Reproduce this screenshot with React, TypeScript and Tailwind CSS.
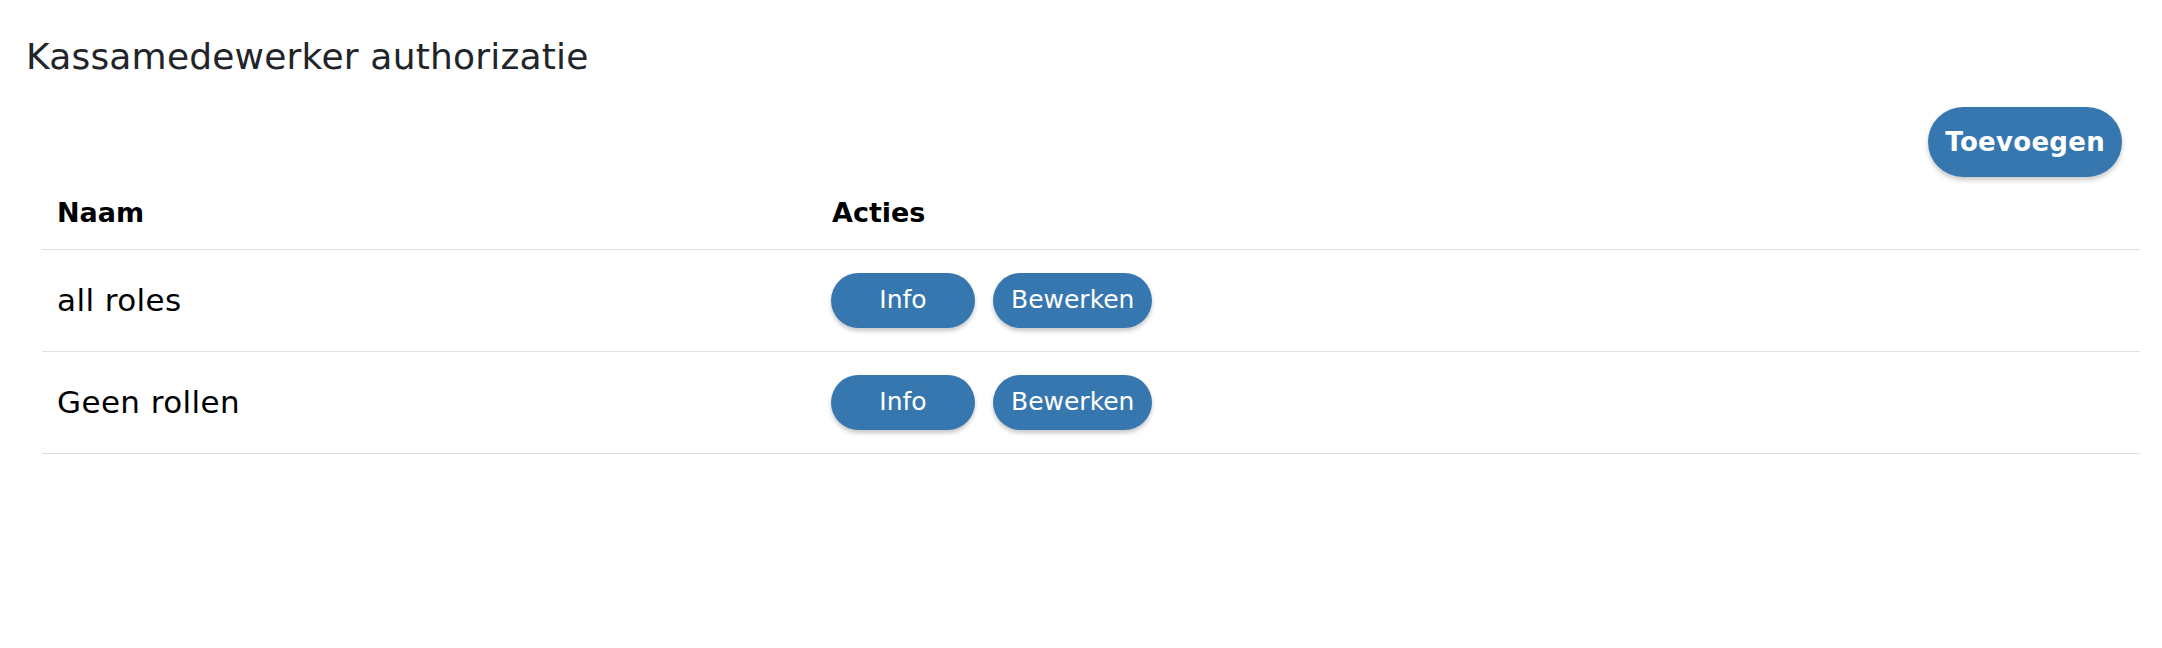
import React from "react";

const font = { fontFamily: "'DejaVu Sans', 'Noto Sans', sans-serif" };

function Btn({ children, wide }: { children: React.ReactNode; wide?: boolean }) {
  return (
    <button
      className={
        "h-[55px] rounded-full bg-[#3777b0] px-[18px] text-[25px] font-normal text-white shadow-[0_3px_4px_rgba(0,0,0,0.22)] " +
        (wide ? "min-w-[144px]" : "")
      }
    >
      {children}
    </button>
  );
}

export default function App() {
  const rows = ["all roles", "Geen rollen"];
  return (
    <div className="min-h-[648px] w-[2162px] bg-white" style={font}>
      <h1 className="pl-[26px] pt-[35px] text-[36px] font-normal leading-[44px] tracking-[0.2px] text-[#212529]">
        Kassamedewerker authorizatie
      </h1>
      <div className="mt-[28px] flex justify-end pr-[40px]">
        <button className="h-[70px] rounded-full bg-[#3777b0] px-[17px] text-[26px] font-bold tracking-[0.3px] text-white shadow-[0_3px_5px_rgba(0,0,0,0.22)]">
          Toevoegen
        </button>
      </div>
      <table className="ml-[42px] w-[2098px] border-collapse text-black">
        <thead>
          <tr className="h-[72px] border-b border-[#dedede]">
            <th className="w-[775px] pl-[15px] text-left text-[27px] font-bold">Naam</th>
            <th className="pl-[15px] text-left text-[27px] font-bold">Acties</th>
          </tr>
        </thead>
        <tbody>
          {rows.map((r) => (
            <tr key={r} className="h-[102px] border-b border-[#dedede]">
              <td className="pl-[15px] text-[31px] font-normal tracking-[0.4px]">{r}</td>
              <td className="pl-[14px]">
                <div className="flex gap-[18px]">
                  <Btn wide>Info</Btn>
                  <Btn>Bewerken</Btn>
                </div>
              </td>
            </tr>
          ))}
        </tbody>
      </table>
    </div>
  );
}
